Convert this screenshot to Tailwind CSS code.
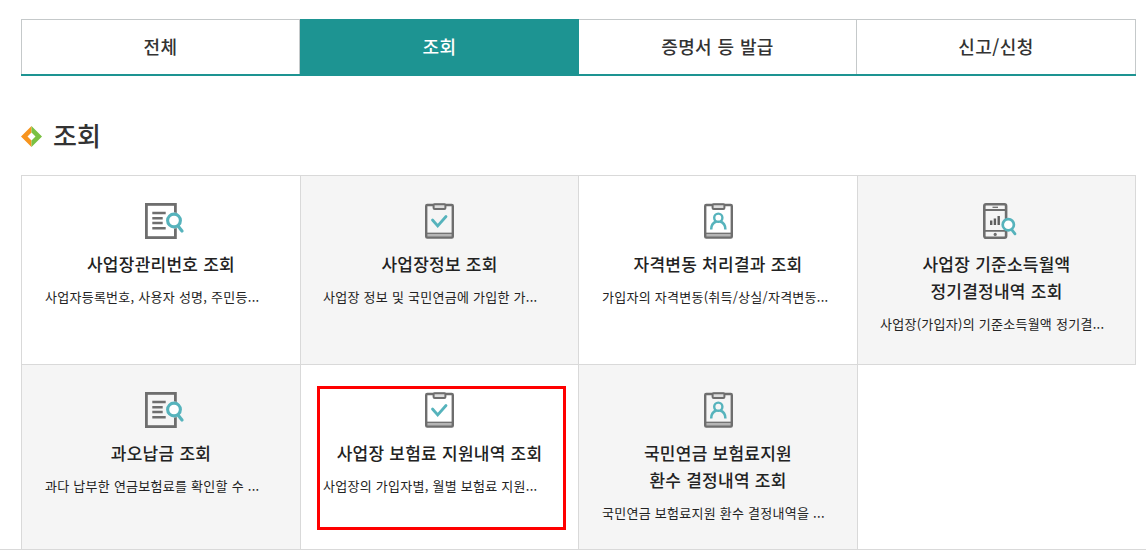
<!DOCTYPE html>
<html lang="ko">
<head>
    <meta charset="UTF-8">
    <meta name="viewport" content="width=device-width, initial-scale=1.0">
    <title>조회</title>
    <script src="https://cdn.jsdelivr.net/npm/@tailwindcss/browser@4"></script>
    <style>
        body {
            font-family: 'Noto Sans CJK KR', sans-serif;
        }
    </style>
</head>
<body class="h-[550px] overflow-hidden bg-white text-[#222]">
    <!-- Shared icons -->
    <svg class="hidden">
        <symbol id="icon-search" viewBox="0 0 40 38">
            <rect x="1.4" y="2.4" width="29" height="33.2" fill="none" stroke="#6e6e6e" stroke-width="2.8"/>
            <path d="M7.3 11h13.4M7.3 16.3h10.4M7.3 21h10.4M7.3 26.3h13.4" stroke="#6e6e6e" stroke-width="2.4"/>
            <circle cx="29" cy="18.5" r="8" fill="#fff"/>
            <path d="M33 24l4 5" stroke="#56b3bc" stroke-width="3.2" stroke-linecap="round"/>
            <circle cx="29" cy="18.5" r="6.4" fill="#fff" stroke="#56b3bc" stroke-width="3.1"/>
        </symbol>
        <symbol id="icon-board" viewBox="0 0 30 38">
            <path d="M1.5 31.5h26v4h-26z" fill="#b5b5b5"/>
            <rect x="1.2" y="3" width="26.6" height="32.6" rx="1" fill="none" stroke="#6e6e6e" stroke-width="2.4"/>
            <path d="M1.5 31.3h26" stroke="#6e6e6e" stroke-width="1.3"/>
            <rect x="8.6" y="2.2" width="11.8" height="4.8" rx="1" fill="#ddd" stroke="#6e6e6e" stroke-width="2"/>
        </symbol>
        <symbol id="icon-check" viewBox="0 0 30 38">
            <use href="#icon-board"/>
            <path d="M7.5 18l5.2 5.9 8.3-9.4" fill="none" stroke="#56b3bc" stroke-width="2.8" stroke-linecap="round"/>
        </symbol>
        <symbol id="icon-person" viewBox="0 0 30 38">
            <use href="#icon-board"/>
            <circle cx="14.3" cy="15.7" r="4.1" fill="none" stroke="#56b3bc" stroke-width="2.4"/>
            <path d="M7.2 27.5c0-4.5 2-7 5.2-8M21.4 27.5c0-4.5-2-7-5.2-8" fill="none" stroke="#56b3bc" stroke-width="2.5"/>
        </symbol>
        <symbol id="icon-phone" viewBox="0 0 36 38">
            <rect x="1.3" y="2.3" width="21.8" height="33.4" rx="1.6" fill="none" stroke="#6e6e6e" stroke-width="2.6"/>
            <path d="M1 8h22.5M1 28.8h22.5" stroke="#6e6e6e" stroke-width="1.8"/>
            <path d="M9.5 5.3h5.5" stroke="#6e6e6e" stroke-width="1.3"/>
            <circle cx="12.2" cy="32.4" r="1.6" fill="#6e6e6e"/>
            <path d="M8.2 23v-4.6M11.9 23v-6.6M15.7 23v-9" stroke="#5e5e5e" stroke-width="2.4"/>
            <path d="M28.5 27.3l3.5 4.5" stroke="#56b3bc" stroke-width="2.8" stroke-linecap="round"/>
            <circle cx="25.3" cy="22.7" r="5.6" fill="#fff" stroke="#56b3bc" stroke-width="2.7"/>
        </symbol>
    </svg>

    <nav class="mt-[19px] ml-[21px] grid h-[57px] w-[1115px] grid-cols-[279px_279px_278px_279px] border-b-2 border-[#1d9492] text-center text-[18px] leading-[53px] font-medium tracking-[0.4px] text-[#333]">
        <a class="h-[55px] border-x border-t border-[#c5c9ca]">전체</a>
        <a class="h-[55px] border-t border-[#1d9492] bg-[#1d9492] text-white">조회</a>
        <a class="h-[55px] border-t border-r border-[#c5c9ca]">증명서 등 발급</a>
        <a class="h-[55px] border-t border-r border-[#c5c9ca]">신고/신청</a>
    </nav>

    <h2 class="mt-10 ml-[21px] flex h-10 items-center gap-[11px] text-[26px] leading-10 font-medium text-[#333]">
        <svg class="h-[21px] w-[21px]" viewBox="0 0 21 21">
            <path d="M10.5 0v6.5l-4 4 4 4V21L0 10.5z" fill="#f7941e"/>
            <path d="M10.5 0v6.5l4 4-4 4V21L21 10.5z" fill="#7ac143"/>
        </svg>
        <span class="-mt-0.5">조회</span>
    </h2>

    <main class="mt-[19px] border-b border-[#d9d9d9]">
        <ul class="ml-[21px] grid w-[1115px] grid-cols-[280px_278px_279px_278px] grid-rows-[190px_184px] text-[17px] leading-[27px] font-medium tracking-[0.25px]">
            <li class="flex flex-col items-center border border-[#d9d9d9] pt-[26px]">
                <svg class="ml-2 h-[38px] w-10"><use href="#icon-search"/></svg>
                <h3 class="mt-[10px]">사업장관리번호 조회</h3>
                <p class="mt-[7px] w-full pl-[23px] text-[13px] leading-[26px] font-normal whitespace-nowrap tracking-[0.26px]">사업자등록번호, 사용자 성명, 주민등...</p>
            </li>
            <li class="flex flex-col items-center border-y border-r border-[#d9d9d9] bg-[#f5f5f5] pt-[26px]">
                <svg class="h-[38px] w-[30px]"><use href="#icon-check"/></svg>
                <h3 class="mt-[10px]">사업장정보 조회</h3>
                <p class="mt-[7px] w-full pl-[22px] text-[13px] leading-[26px] font-normal whitespace-nowrap tracking-[0.26px]">사업장 정보 및 국민연금에 가입한 가...</p>
            </li>
            <li class="flex flex-col items-center border-y border-r border-[#d9d9d9] pt-[26px]">
                <svg class="ml-px h-[38px] w-[30px]"><use href="#icon-person"/></svg>
                <h3 class="mt-[10px]">자격변동 처리결과 조회</h3>
                <p class="mt-[7px] w-full pl-[23px] text-[13px] leading-[26px] font-normal whitespace-nowrap tracking-[0.26px]">가입자의 자격변동(취득/상실/자격변동...</p>
            </li>
            <li class="flex flex-col items-center border-y border-r border-[#d9d9d9] bg-[#f5f5f5] pt-[26px]">
                <svg class="ml-2 h-[38px] w-9"><use href="#icon-phone"/></svg>
                <h3 class="mt-[10px] text-center">사업장 기준소득월액<br>정기결정내역 조회</h3>
                <p class="mt-[7px] w-full pl-[22px] text-[13px] leading-[26px] font-normal whitespace-nowrap tracking-[0.26px]">사업장(가입자)의 기준소득월액 정기결...</p>
            </li>
            <li class="flex flex-col items-center border-x border-[#d9d9d9] bg-[#f5f5f5] pt-[26px]">
                <svg class="ml-2 h-[38px] w-10"><use href="#icon-search"/></svg>
                <h3 class="mt-[10px]">과오납금 조회</h3>
                <p class="mt-[7px] w-full pl-[23px] text-[13px] leading-[26px] font-normal whitespace-nowrap tracking-[0.26px]">과다 납부한 연금보험료를 확인할 수 ...</p>
            </li>
            <li class="relative flex flex-col items-center border-r border-[#d9d9d9] pt-[26px]">
                <svg class="h-[38px] w-[30px]"><use href="#icon-check"/></svg>
                <h3 class="mt-[10px]">사업장 보험료 지원내역 조회</h3>
                <p class="mt-[7px] w-full pl-[22px] text-[13px] leading-[26px] font-normal whitespace-nowrap tracking-[0.26px]">사업장의 가입자별, 월별 보험료 지원...</p>
                <!-- Highlight box -->
                <div class="absolute top-[21px] left-4 h-[144px] w-[249px] border-3 border-[#f00]"></div>
            </li>
            <li class="flex flex-col items-center border-r border-[#d9d9d9] bg-[#f5f5f5] pt-[26px]">
                <svg class="ml-px h-[38px] w-[30px]"><use href="#icon-person"/></svg>
                <h3 class="mt-[10px] text-center">국민연금 보험료지원<br>환수 결정내역 조회</h3>
                <p class="mt-[7px] w-full pl-[23px] text-[13px] leading-[26px] font-normal whitespace-nowrap tracking-[0.26px]">국민연금 보험료지원 환수 결정내역을 ...</p>
            </li>
        </ul>
    </main>
</body>
</html>
